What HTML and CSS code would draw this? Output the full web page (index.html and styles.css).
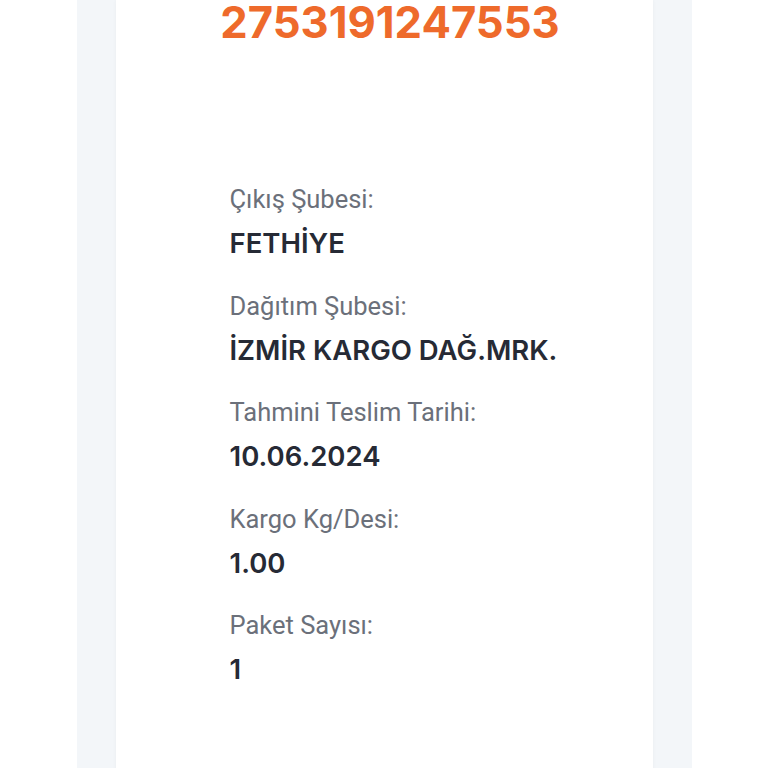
FILE: index.html
```html
<!DOCTYPE html>
<html lang="tr">
<head>
    <meta charset="UTF-8">
    <meta name="viewport" content="width=device-width, initial-scale=1.0">
    <title>Kargo Takip</title>
    <link rel="stylesheet" href="styles.css">
</head>
<body>

    <div class="page">
        <div class="card">
            <!-- Takip numarası -->
            <div class="tracking-no">2753191247553</div>

            <!-- Gönderi bilgileri -->
            <div class="details">
                <div class="item">
                    <div class="label">Çıkış Şubesi:</div>
                    <div class="value">FETHİYE</div>
                </div>
                <div class="item">
                    <div class="label">Dağıtım Şubesi:</div>
                    <div class="value">İZMİR KARGO DAĞ.MRK.</div>
                </div>
                <div class="item">
                    <div class="label">Tahmini Teslim Tarihi:</div>
                    <div class="value">10.06.2024</div>
                </div>
                <div class="item">
                    <div class="label">Kargo Kg/Desi:</div>
                    <div class="value">1.00</div>
                </div>
                <div class="item">
                    <div class="label">Paket Sayısı:</div>
                    <div class="value">1</div>
                </div>
            </div>
        </div>
    </div>

</body>
</html>
```

FILE: styles.css
```css
body {
    margin: 0;
    background: #ffffff;
    font-family: Inter, "Noto Sans", sans-serif;
    overflow: hidden;
}

.page {
    width: 537px;
    margin: 0 auto;
    padding: 0 39px;
    background: #f3f6f9;
    min-height: 768px;
}

.card {
    background: #ffffff;
    min-height: 800px;
    box-shadow: 0 0 4px rgba(0, 0, 0, 0.04);
}

.tracking-no {
    padding: 2px 0 0 12px;
    text-align: center;
    font-size: 43.6px;
    font-weight: 700;
    line-height: 42px;
    color: #ee6a2b;
}

.details {
    padding: 139px 0 0 114px;
}

.item {
    margin-bottom: 26.5px;
}

.label {
    font-family: Roboto, "Liberation Sans", sans-serif;
    font-size: 25.5px;
    line-height: 32px;
    color: #6b707a;
}

.value {
    margin-top: 8px;
    font-size: 27.5px;
    font-weight: 600;
    line-height: 40px;
    color: #262a35;
}
```
